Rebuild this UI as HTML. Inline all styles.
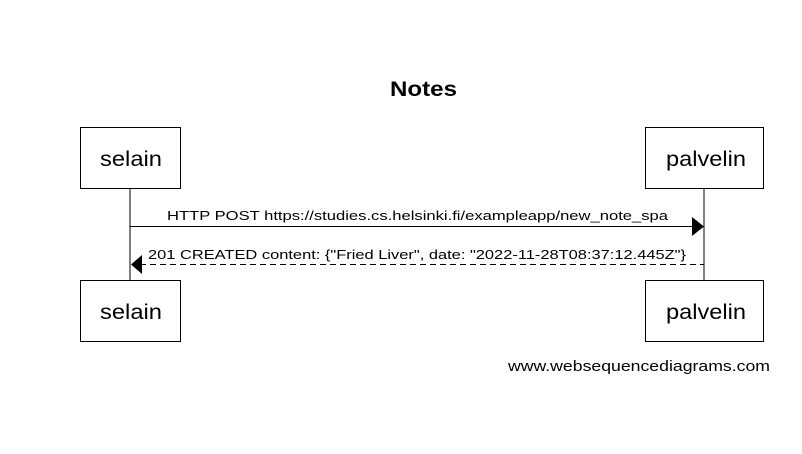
<!DOCTYPE html>
<html><head><style>body{margin:0;background:#fff}</style></head><body>
<svg width="802" height="449" xmlns="http://www.w3.org/2000/svg" font-family="Liberation Sans, Arial, sans-serif">
<rect width="802" height="449" fill="#fff"/>
<text x="390" y="96" font-size="21" font-weight="bold" textLength="67" lengthAdjust="spacingAndGlyphs">Notes</text>
<line x1="130" y1="188" x2="130" y2="280" stroke="#000"/>
<line x1="704" y1="188" x2="704" y2="280" stroke="#000"/>
<rect x="80.5" y="127.5" width="100" height="61" fill="#fff" stroke="#000"/>
<rect x="80.5" y="280.5" width="100" height="61" fill="#fff" stroke="#000"/>
<rect x="645.5" y="127.5" width="118" height="61" fill="#fff" stroke="#000"/>
<rect x="645.5" y="280.5" width="118" height="61" fill="#fff" stroke="#000"/>
<text x="100" y="166" font-size="21" textLength="62" lengthAdjust="spacingAndGlyphs">selain</text>
<text x="100" y="319" font-size="21" textLength="62" lengthAdjust="spacingAndGlyphs">selain</text>
<text x="666" y="166" font-size="21" textLength="80" lengthAdjust="spacingAndGlyphs">palvelin</text>
<text x="666" y="319" font-size="21" textLength="80" lengthAdjust="spacingAndGlyphs">palvelin</text>
<line x1="130" y1="226.5" x2="694" y2="226.5" stroke="#000"/>
<polygon points="692,217 704,226.5 692,236" fill="#000"/>
<text x="167" y="220" font-size="13" textLength="501" lengthAdjust="spacingAndGlyphs">HTTP POST https://studies.cs.helsinki.fi/exampleapp/new_note_spa</text>
<line x1="140" y1="264.5" x2="704" y2="264.5" stroke="#000" stroke-dasharray="6,4"/>
<polygon points="142,255 131,264.5 142,274" fill="#000"/>
<text x="148" y="259" font-size="13" textLength="538" lengthAdjust="spacingAndGlyphs">201 CREATED content: {"Fried Liver", date: "2022-11-28T08:37:12.445Z"}</text>
<text x="508" y="371" font-size="15" textLength="262" lengthAdjust="spacingAndGlyphs">www.websequencediagrams.com</text>
</svg>
</body></html>
